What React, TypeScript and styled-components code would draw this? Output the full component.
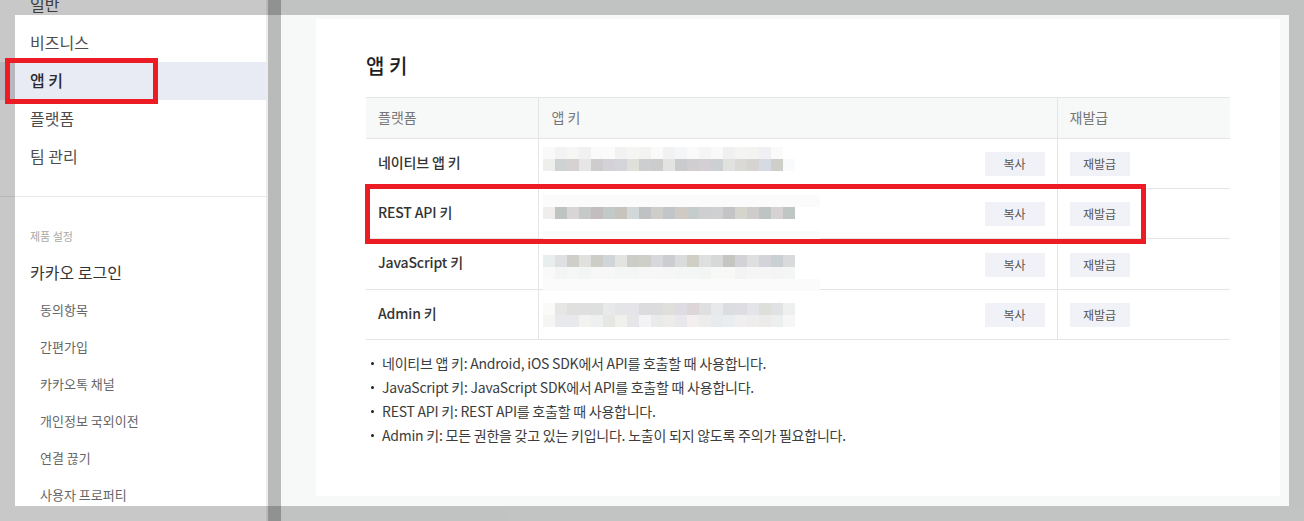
import styled, { createGlobalStyle } from "styled-components";

const GlobalStyle = createGlobalStyle`
  html, body {
    margin: 0;
    padding: 0;
    background: #fff;
  }
  body {
    font-family: "Noto Sans CJK KR", "Noto Sans", sans-serif;
    color: #333;
  }
`;

const Page = styled.div`
  position: relative;
  display: flex;
  width: 1304px;
  height: 521px;
  overflow: hidden;
`;

const Sidebar = styled.aside`
  flex: none;
  box-sizing: border-box;
  width: 268px;
  background: #fff;
  border-right: 2px solid #ececec;
`;

const NavList = styled.nav`
  margin-top: -14px;
`;

const NavItem = styled.div<{ $active?: boolean }>`
  height: 38px;
  padding-left: 30px;
  font-size: 16px;
  line-height: 36px;
  letter-spacing: 0;
  font-weight: ${(p) => (p.$active ? 500 : 400)};
  color: ${(p) => (p.$active ? "#2a2a32" : "#4d4d4d")};
  background: ${(p) => (p.$active ? "#e8ebf3" : "transparent")};
`;

const Divider = styled.hr`
  margin: 20px 0 0;
  border: 0;
  border-top: 1px solid #e8e8e8;
`;

const SectionLabel = styled.div`
  margin-top: 30px;
  padding-left: 30px;
  font-size: 11px;
  line-height: 18px;
  color: #a8a8a8;
`;

const ProductTitle = styled.div`
  margin-top: 8px;
  height: 38px;
  padding-left: 30px;
  font-size: 16px;
  line-height: 38px;
  color: #333;
`;

const SubItem = styled.div`
  height: 37px;
  padding-left: 40px;
  font-size: 13px;
  line-height: 37px;
  color: #666;
`;

const Main = styled.main`
  flex: 1;
  padding: 19px 24px 0 48px;
  background: #f7f8f8;
`;

const Card = styled.section`
  box-sizing: border-box;
  height: 477px;
  padding: 31px 50px 0;
  background: #fff;
`;

const Title = styled.h2`
  margin: 0 0 16px;
  font-size: 20px;
  line-height: 31px;
  font-weight: 500;
  color: #1f1f1f;
`;

const KeyTable = styled.table`
  width: 864px;
  border-collapse: collapse;
  table-layout: fixed;
  border-top: 1px solid #e5e5e5;
`;

const HeadCell = styled.th<{ $width: number }>`
  box-sizing: border-box;
  width: ${(p) => p.$width}px;
  height: 41px;
  padding: 0 12px 2px;
  background: #f7f8f8;
  border-bottom: 1px solid #e5e5e5;
  font-size: 14px;
  font-weight: 400;
  text-align: left;
  color: #777;
  & + & {
    padding-left: 13px;
    border-left: 1px solid #e5e5e5;
  }
  &:last-child {
    padding-left: 12px;
  }
`;

const Row = styled.tr<{ $height: number }>`
  height: ${(p) => p.$height}px;
`;

const NameCell = styled.td`
  padding: 0 12px 4px;
  border-bottom: 1px solid #e5e5e5;
  font-size: 14px;
  font-weight: 500;
  letter-spacing: -0.15px;
  color: #333;
`;

const KeyCell = styled.td`
  position: relative;
  padding: 0 12px 12px;
  border-left: 1px solid #e5e5e5;
  border-bottom: 1px solid #e5e5e5;
  line-height: 0;
  text-align: right;
  vertical-align: bottom;
`;

const ReissueCell = styled(KeyCell)`
  text-align: left;
`;

const SmallButton = styled.button`
  box-sizing: border-box;
  display: inline-block;
  width: 60px;
  height: 24px;
  padding: 0;
  border: 0;
  background: #f1f2f7;
  font-family: inherit;
  font-size: 12px;
  line-height: 24px;
  color: #555;
  vertical-align: top;
`;

const Mosaic = styled.svg<{ $top: number }>`
  position: absolute;
  left: 4px;
  top: ${(p) => p.$top}px;
  display: block;
`;

const NoteList = styled.ul`
  margin: 11px 0 0;
  padding: 0 0 0 16px;
  list-style: none;
`;

const Note = styled.li`
  position: relative;
  font-size: 14px;
  line-height: 24px;
  letter-spacing: -0.23px;
  color: #3c3c3c;
  &::before {
    content: "";
    position: absolute;
    left: -11px;
    top: 11px;
    width: 3px;
    height: 3px;
    border-radius: 50%;
    background: #222;
  }
`;

const Dim = styled.div<{ $x: number; $y: number; $w: number; $h: number; $alpha?: number }>`
  position: absolute;
  left: ${(p) => p.$x}px;
  top: ${(p) => p.$y}px;
  width: ${(p) => p.$w}px;
  height: ${(p) => p.$h}px;
  background: rgba(0, 0, 0, ${(p) => p.$alpha ?? 0.215});
`;

const RedFrame = styled.div<{ $x: number; $y: number; $w: number; $h: number }>`
  position: absolute;
  box-sizing: border-box;
  left: ${(p) => p.$x}px;
  top: ${(p) => p.$y}px;
  width: ${(p) => p.$w}px;
  height: ${(p) => p.$h}px;
  border: 5px solid #ed1c24;
`;

type Band = { y: number; cells: string[]; x?: number };

const CELL = 12;

const rows: { name: string; height: number; top: number; faint: { y: number; h: number }[]; bands: Band[] }[] = [
  {
    name: "네이티브 앱 키",
    height: 50,
    top: 8,
    faint: [],
    bands: [
      {
        y: 0,
        cells: "f9f9f9 f3f3f3 f6f6f5 f1f1f2 fafafa fbfbfa f2f2f3 f5f5f4 f3f3f2 fafafa f2f2f3 f5f6f8 fafafa f5f5f6 f9f9f9 f0f0f1 f4f4f3 f3f3f2 f0f0f4 fafafa".split(" "),
      },
      {
        y: 12,
        cells: "eeeeed cfd2d3 d6d2d2 e6e6e7 cfcccd d5d2d7 d4d5da e0e0db cdcecf cbcccb e3e3e1 cacbcd d1ced2 d3cfd2 cdd0d3 e1e1dd dad9d5 d5d4d0 d6dae3 cfcfca f9fafb".split(" "),
      },
    ],
  },
  {
    name: "REST API 키",
    height: 50,
    top: 6,
    faint: [
      { y: 0, h: 12 },
      { y: 36, h: 10 },
    ],
    bands: [
      {
        y: 12,
        cells: "efeeed bec4c2 d9d4d6 c5cac9 c4bdc0 c2cac8 c9c3bd d2d8d7 c0c1c5 cfcdc9 c3c6c8 cfcbc4 c5cccb cfcfd2 cfd1d1 c4c4c6 d5d5cd cfcccc bdc4c3 d6d1d2 c0c6c4".split(" "),
      },
    ],
  },
  {
    name: "JavaScript 키",
    height: 51,
    top: 16,
    faint: [{ y: 24, h: 12 }],
    bands: [
      {
        y: 0,
        cells: "e8edee dfe0e1 cfcec9 e0e1de cdcdc8 d0d5d9 e3e3e1 cdcdc8 cfcfc9 d8d8dc cbcdd0 dadcdb cfcfc5 dde0df d7d9d9 c5c5c2 d2d2d7 dde0de d5d3da c9cfd2 d8dadc".split(" "),
      },
      {
        y: 12,
        cells: "f9f9f9 f3f4f4 f5f6f6 f3f5f5 f7f7f7 f7f7f7 f4f5f5 f4f5f5 f7f7f7 f7f7f7 f6f6f6 f4f5f5 f4f5f5 f3f5f5 f8f8f7 f8f8f7 f3f3f4 f5f5f5 f5f5f5 f4f4f4 f4f5f5".split(" "),
      },
    ],
  },
  {
    name: "Admin 키",
    height: 50,
    top: 13,
    faint: [],
    bands: [
      {
        y: 0,
        cells: "fafaf8 e6e6e7 e0e0de dfdfe0 dedfdf e8e9ea e4e5e7 e5e4e8 dcdcde dcdcdd dfe0dc dedce2 dcd6d9 dfdfe1 e8e9eb dcdde0 dddde3 e4e5e8 dededa e1e2e3 eef0ef".split(" "),
      },
      {
        y: 12,
        cells: "f5f5f3 e9e8ec e7e9eb f2f2f0 eeeff1 e6e6e3 f0f0ee e6e6e9 f3f3f5 e9eaea edecea e8e8ec f3efee ebeceb e8ebed e9edef f0eeee ededee ecebea edeeee f6f6f6".split(" "),
      },
    ],
  },
];

const notes = [
  "네이티브 앱 키: Android, iOS SDK에서 API를 호출할 때 사용합니다.",
  "JavaScript 키: JavaScript SDK에서 API를 호출할 때 사용합니다.",
  "REST API 키: REST API를 호출할 때 사용합니다.",
  "Admin 키: 모든 권한을 갖고 있는 키입니다. 노출이 되지 않도록 주의가 필요합니다.",
];

const App = () => {
  return (
    <>
      <GlobalStyle />
      <Page>
        <Sidebar>
          <NavList>
            <NavItem>일반</NavItem>
            <NavItem>비즈니스</NavItem>
            <NavItem $active>앱 키</NavItem>
            <NavItem>플랫폼</NavItem>
            <NavItem>팀 관리</NavItem>
          </NavList>
          <Divider />
          <SectionLabel>제품 설정</SectionLabel>
          <ProductTitle>카카오 로그인</ProductTitle>
          <SubItem>동의항목</SubItem>
          <SubItem>간편가입</SubItem>
          <SubItem>카카오톡 채널</SubItem>
          <SubItem>개인정보 국외이전</SubItem>
          <SubItem>연결 끊기</SubItem>
          <SubItem>사용자 프로퍼티</SubItem>
        </Sidebar>

        <Main>
          <Card>
            <Title>앱 키</Title>
            <KeyTable>
              <thead>
                <tr>
                  <HeadCell $width={172}>플랫폼</HeadCell>
                  <HeadCell $width={519}>앱 키</HeadCell>
                  <HeadCell $width={173}>재발급</HeadCell>
                </tr>
              </thead>
              <tbody>
                {rows.map((row) => (
                  <Row key={row.name} $height={row.height}>
                    <NameCell>{row.name}</NameCell>
                    <KeyCell>
                      <Mosaic $top={row.top} width={278} height={48} aria-hidden="true">
                        {row.faint.map((f) => (
                          <rect key={f.y} x={0} y={f.y} width={277} height={f.h} fill="#fbfbfb" />
                        ))}
                        {row.bands.map((band) =>
                          band.cells.map((color, i) => (
                            <rect key={`${band.y}-${i}`} x={i * CELL} y={band.y} width={CELL} height={CELL} fill={`#${color}`} />
                          ))
                        )}
                      </Mosaic>
                      <SmallButton>복사</SmallButton>
                    </KeyCell>
                    <ReissueCell>
                      <SmallButton>재발급</SmallButton>
                    </ReissueCell>
                  </Row>
                ))}
              </tbody>
            </KeyTable>
            <NoteList>
              {notes.map((note) => (
                <Note key={note}>{note}</Note>
              ))}
            </NoteList>
          </Card>
        </Main>

        {/* dimmed frame over the screenshot */}
        <Dim $x={0} $y={0} $w={1304} $h={15} />
        <Dim $x={0} $y={506} $w={1304} $h={15} />
        <Dim $x={0} $y={15} $w={15} $h={491} />
        <Dim $x={1289} $y={15} $w={15} $h={491} />
        <Dim $x={268} $y={0} $w={13} $h={521} $alpha={0.25} />

        <RedFrame $x={5} $y={58} $w={153} $h={46} />
        <RedFrame $x={365} $y={184} $w={781} $h={60} />
      </Page>
    </>
  );
};

export default App;
